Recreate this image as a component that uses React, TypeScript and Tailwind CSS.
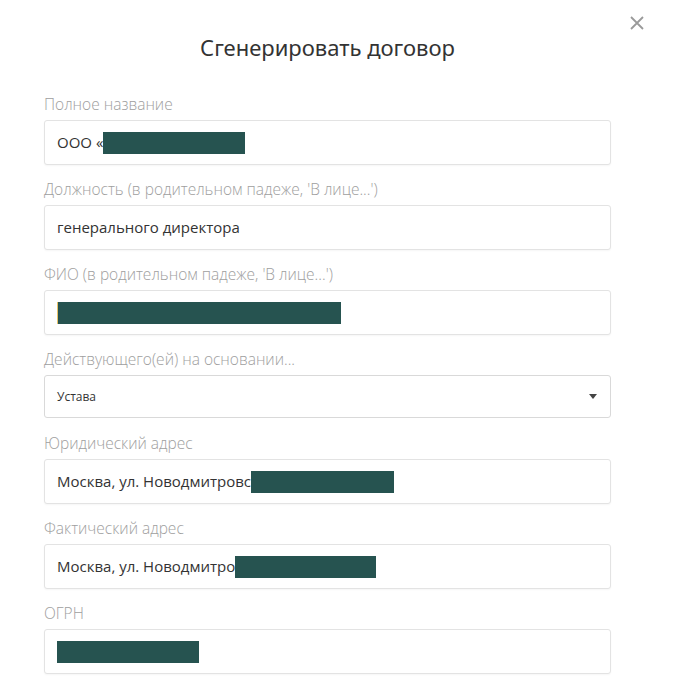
const Redact = ({ w }: { w: number }) => (
  <span className="inline-block h-[22px] bg-[#265350] align-middle" style={{ width: w }} />
);

function Field({ label, children }: { label: string; children: React.ReactNode }) {
  return (
    <div className="mb-[14px]">
      <div className="mb-[6px] h-[20px] text-[15.5px] leading-[20px] font-light text-[#9e9e9e]">{label}</div>
      <div className="flex h-[45px] items-center rounded-[3px] border border-[#e3e3e3] bg-white pl-[12px] text-[15px] text-[#333] shadow-[0_1px_2px_rgba(0,0,0,0.04)]">
        {children}
      </div>
    </div>
  );
}

export default function App() {
  return (
    <div className="relative min-h-[688px] w-[682px] bg-white font-['Open_Sans',sans-serif]">
      <button className="absolute right-[38px] top-[16px] text-[#9a9a9a]">
        <svg width="14" height="14" viewBox="0 0 14 14" stroke="currentColor" strokeWidth="1.8" fill="none">
          <path d="M1 1L13 13M13 1L1 13" />
        </svg>
      </button>
      <div className="ml-[44px] w-[567px] pt-[32px]">
        <h1 className="text-center text-[22px] leading-[30px] text-[#333] font-['Noto_Sans',sans-serif]">
          Сгенерировать договор
        </h1>
        <div className="mt-[32px]">
          <Field label="Полное название">
            <span>ООО «</span>
            <Redact w={142} />
          </Field>
          <Field label="Должность (в родительном падеже, 'В лице...')">
            <span>генерального директора</span>
          </Field>
          <Field label="ФИО (в родительном падеже, 'В лице...')">
            <span className="inline-block h-[22px] w-[1px] bg-[#e8c36a]" />
            <Redact w={283} />
          </Field>
          <div className="mb-[15px]">
            <div className="mb-[6px] h-[20px] text-[15.5px] leading-[20px] font-light text-[#9e9e9e]">
              Действующего(ей) на основании...
            </div>
            <div className="flex h-[43px] items-center justify-between rounded-[3px] border border-[#d9d9d9] bg-white pl-[12px] pr-[13px] text-[12px] text-[#333]">
              <span>Устава</span>
              <svg width="8" height="5" viewBox="0 0 8 5">
                <path d="M0 0H8L4 5Z" fill="#444" />
              </svg>
            </div>
          </div>
          <Field label="Юридический адрес">
            <span>Москва, ул. Новодмитровс</span>
            <Redact w={143} />
          </Field>
          <Field label="Фактический адрес">
            <span>Москва, ул. Новодмитро</span>
            <Redact w={141} />
          </Field>
          <Field label="ОГРН">
            <Redact w={142} />
          </Field>
        </div>
      </div>
    </div>
  );
}
